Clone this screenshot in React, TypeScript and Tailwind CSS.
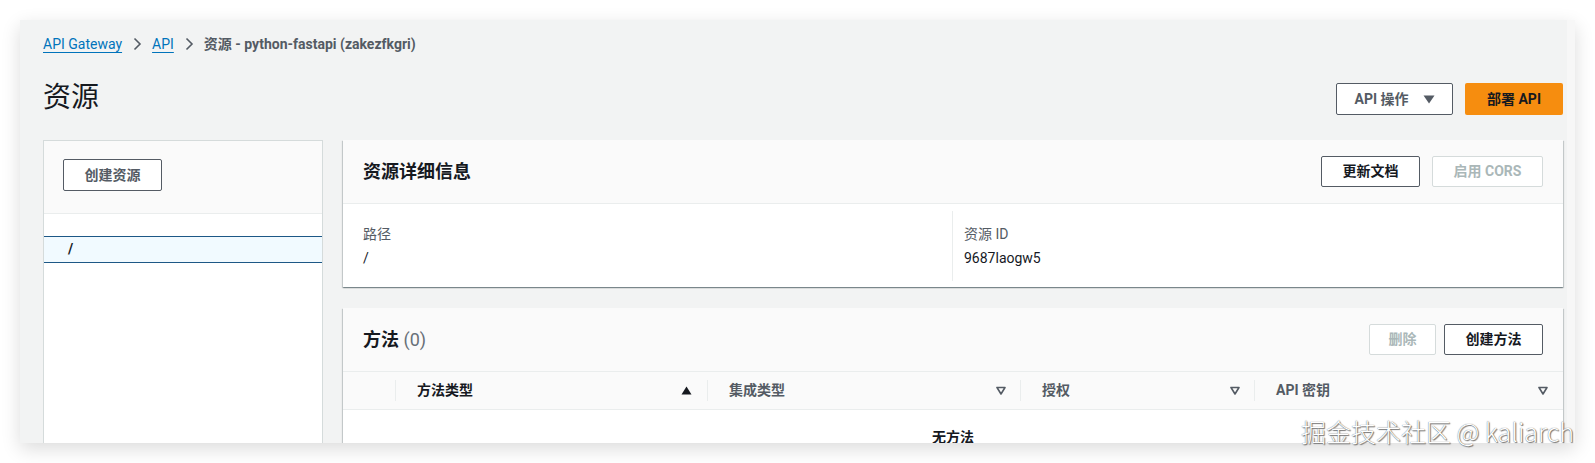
import React from "react";

const font = "font-['Roboto','Noto_Sans_CJK_SC',sans-serif]";

function Chevron() {
  return (
    <svg width="10" height="14" viewBox="0 0 10 14" className="mx-[10px]">
      <path d="M2.5 1.5 L8 7 L2.5 12.5" fill="none" stroke="#545b64" strokeWidth="1.6" />
    </svg>
  );
}

function SortDown() {
  return (
    <svg width="10" height="9" viewBox="0 0 10 9">
      <path d="M1 1.5 H9 L5 8 Z" fill="none" stroke="#545b64" strokeWidth="1.6" strokeLinejoin="round" />
    </svg>
  );
}

function SortUp() {
  return (
    <svg width="11" height="9" viewBox="0 0 11 9">
      <path d="M5.5 0.5 L10.5 8.5 H0.5 Z" fill="#16191f" />
    </svg>
  );
}

function Btn({ children, disabled, className = "" }: { children: React.ReactNode; disabled?: boolean; className?: string }) {
  return (
    <div
      className={
        "flex h-[31px] items-center justify-center rounded-[2px] border bg-white text-[14px] font-bold " +
        (disabled ? "border-[#d5dbdb] text-[#aab7b8] " : "border-[#545b64] text-[#16191f] ") +
        className
      }
    >
      {children}
    </div>
  );
}

const cardShadow =
  "shadow-[0_1px_1px_0_rgba(0,28,36,0.3),1px_1px_1px_0_rgba(0,28,36,0.15),-1px_1px_1px_0_rgba(0,28,36,0.15)]";

export default function App() {
  return (
    <div className={`relative h-[463px] w-[1595px] overflow-hidden bg-white ${font}`}>
      <div className="ml-[20px] mt-[20px] flex h-[423px] w-[1555px] overflow-hidden bg-[#f2f3f3] shadow-[0_6px_18px_rgba(0,0,0,0.14)]">
        <div className="flex-1 pl-[23px] pr-[4px] pt-[14px]">
          {/* breadcrumb */}
          <div className="flex h-[20px] items-center text-[14px] leading-[20px]">
            <span className="text-[#0073bb] underline decoration-[#0073bb] underline-offset-[3px]">API Gateway</span>
            <Chevron />
            <span className="text-[#0073bb] underline decoration-[#0073bb] underline-offset-[3px]">API</span>
            <Chevron />
            <span className="font-bold text-[#545b64]">资源 - python-fastapi (zakezfkgri)</span>
          </div>

          {/* title row */}
          <div className="mt-[29px] flex h-[32px] items-center justify-between">
            <h1 className="-mt-[2px] text-[28px] font-normal leading-[32px] text-[#16191f]">资源</h1>
            <div className="flex gap-[12px]">
              <Btn className="h-[32px] w-[117px] gap-[14px] text-[#545b64]">
                <span className="text-[#545b64]">API 操作</span>
                <svg width="12" height="9" viewBox="0 0 12 9">
                  <path d="M0.5 0.5 H11.5 L6 8.5 Z" fill="#545b64" />
                </svg>
              </Btn>
              <div className="flex h-[32px] w-[98px] items-center justify-center rounded-[2px] bg-[#f68d0f] text-[14px] font-bold text-[#16191f]">
                部署 API
              </div>
            </div>
          </div>

          {/* panels */}
          <div className="mt-[25px] flex gap-[20px]">
            {/* left tree */}
            <div className="h-[320px] w-[280px] border border-[#d5dbdb] bg-white">
              <div className="flex h-[73px] items-start border-b border-[#eaeded] bg-[#fafafa] pl-[19px] pt-[18px]">
                <Btn className="h-[32px] w-[99px] text-[#545b64]">
                  <span className="text-[#545b64]">创建资源</span>
                </Btn>
              </div>
              <div className="mt-[22px] flex h-[27px] items-center border-y border-[#1d5886] bg-[#f1faff] pl-[24px] text-[14px] font-bold text-[#16191f]">
                /
              </div>
            </div>

            {/* right column */}
            <div className="flex w-[1220px] flex-col gap-[21px]">
              <div className={`bg-white ${cardShadow}`}>
                <div className="flex h-[64px] items-center justify-between border-b border-[#eaeded] bg-[#fafafa] pl-[20px] pr-[20px]">
                  <div className="text-[18px] font-bold text-[#16191f]">资源详细信息</div>
                  <div className="flex gap-[12px]">
                    <Btn className="w-[99px]">更新文档</Btn>
                    <Btn disabled className="w-[111px]">启用 CORS</Btn>
                  </div>
                </div>
                <div className="flex h-[83px] items-center">
                  <div className="flex w-[609px] flex-col pl-[20px] text-[14px] leading-[24px]">
                    <span className="text-[#545b64]">路径</span>
                    <span className="text-[#16191f]">/</span>
                  </div>
                  <div className="flex h-[70px] flex-1 flex-col justify-center border-l border-[#eaeded] pl-[11px] text-[14px] leading-[24px]">
                    <span className="text-[#545b64]">资源 ID</span>
                    <span className="text-[#16191f]">9687laogw5</span>
                  </div>
                </div>
              </div>

              <div className={`h-[200px] bg-white ${cardShadow}`}>
                <div className="flex h-[64px] items-center justify-between border-b border-[#eaeded] bg-[#fafafa] pl-[20px] pr-[20px]">
                  <div className="text-[18px] font-bold text-[#16191f]">
                    方法 <span className="font-normal text-[#687078]">(0)</span>
                  </div>
                  <div className="flex gap-[8px]">
                    <Btn disabled className="w-[67px]">删除</Btn>
                    <Btn className="w-[99px]">创建方法</Btn>
                  </div>
                </div>
                <div className="grid h-[38px] grid-cols-[53px_312px_313px_234px_1fr] border-b border-[#eaeded] bg-[#fafafa] text-[14px] font-bold text-[#545b64]">
                  <div className="my-[8px] border-r border-[#eaeded]" />
                  <div className="my-[8px] flex items-center justify-between border-r border-[#eaeded] pl-[21px] pr-[15px]">
                    <span className="text-[#16191f]">方法类型</span>
                    <SortUp />
                  </div>
                  <div className="my-[8px] flex items-center justify-between border-r border-[#eaeded] pl-[21px] pr-[14px]">
                    <span>集成类型</span>
                    <SortDown />
                  </div>
                  <div className="my-[8px] flex items-center justify-between border-r border-[#eaeded] pl-[21px] pr-[14px]">
                    <span>授权</span>
                    <SortDown />
                  </div>
                  <div className="my-[8px] flex items-center justify-between pl-[21px] pr-[15px]">
                    <span>API 密钥</span>
                    <SortDown />
                  </div>
                </div>
                <div className="pt-[17px] text-center text-[14px] font-bold leading-[20px] text-[#16191f]">无方法</div>
              </div>
            </div>
          </div>
        </div>
        <div className="w-[8px] bg-[#f7f7f7]" />
      </div>

      {/* watermark */}
      <div className="absolute left-[1301px] top-[415px] whitespace-nowrap font-['Noto_Sans_CJK_SC',sans-serif] text-[25px] font-light leading-[32px] text-white [text-shadow:0_0_1px_#555,1px_1px_1px_#777]">
        掘金技术社区 @ kaliarch
      </div>
    </div>
  );
}
